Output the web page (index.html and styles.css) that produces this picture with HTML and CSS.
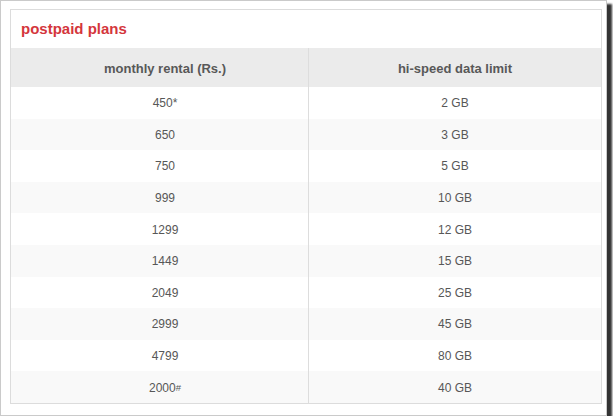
FILE: index.html
```html
<!DOCTYPE html>
<html>
<head>
<meta charset="utf-8">
<link rel="stylesheet" href="styles.css">
</head>
<body>
<div class="frame">
  <div class="panel">
    <h2 class="title">postpaid plans</h2>
    <div class="plans">
      <div class="cell head first">monthly rental (Rs.)</div>
      <div class="cell head">hi-speed data limit</div>

      <div class="cell first">450*</div><div class="cell">2 GB</div>
      <div class="cell first alt">650</div><div class="cell alt">3 GB</div>
      <div class="cell first">750</div><div class="cell">5 GB</div>
      <div class="cell first alt">999</div><div class="cell alt">10 GB</div>
      <div class="cell first">1299</div><div class="cell">12 GB</div>
      <div class="cell first alt">1449</div><div class="cell alt">15 GB</div>
      <div class="cell first">2049</div><div class="cell">25 GB</div>
      <div class="cell first alt">2999</div><div class="cell alt">45 GB</div>
      <div class="cell first">4799</div><div class="cell">80 GB</div>
      <div class="cell first alt">2000<sup class="mark">#</sup></div><div class="cell alt">40 GB</div>
    </div>
  </div>
</div>
</body>
</html>
```

FILE: styles.css
```css
html, body {
  margin: 0;
  padding: 0;
  background: #ffffff;
}

body {
  font-family: "Liberation Sans", Arial, sans-serif;
}

.frame {
  box-sizing: border-box;
  width: 607px;
  height: 416px;
  border: 1px solid #cacaca;
  padding: 8px 0 0 9px;
  background: #ffffff;
  box-shadow: 5px 4px 2px #333333;
}

.panel {
  box-sizing: border-box;
  width: 592px;
  border: 1px solid #dcdcdc;
  background: #ffffff;
}

.title {
  margin: 0;
  padding: 10px 10px 11px 10px;
  font-size: 15px;
  line-height: 17px;
  font-weight: bold;
  color: #d4363c;
}

.plans {
  display: grid;
  grid-template-columns: 298px 292px;
  grid-template-rows: 39px repeat(10, 31.6px);
}

.cell {
  display: flex;
  align-items: center;
  justify-content: center;
  padding-top: 1px;
  font-size: 12px;
  color: #575757;
  background: #ffffff;
}

.cell.first {
  border-right: 1px solid #dddddd;
  padding-left: 11px;
}

.cell.alt {
  background: #f9f9f9;
}

.cell.head {
  background: #ebebeb;
  font-weight: bold;
  font-size: 13px;
  color: #585858;
}

.mark {
  font-size: 9.5px;
  line-height: 0;
  vertical-align: 5px;
}
```
